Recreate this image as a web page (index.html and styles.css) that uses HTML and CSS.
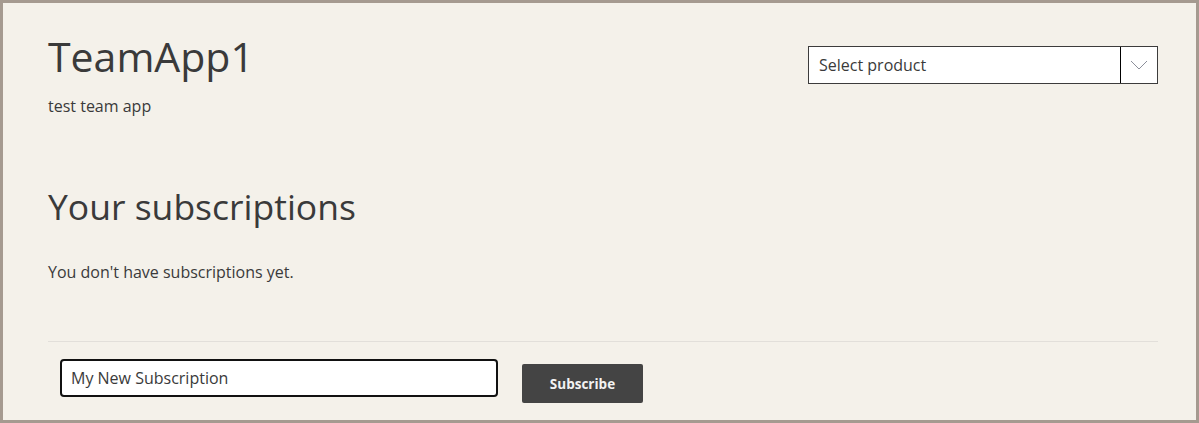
FILE: index.html
```html
<!DOCTYPE html>
<html>
<head>
<meta charset="utf-8">
<link rel="stylesheet" href="styles.css">
</head>
<body>
<div class="page">
  <div class="header">
    <div class="titles">
      <h1 class="title">TeamApp1</h1>
      <p class="subtitle">test team app</p>
    </div>
    <div class="select">
      <span class="select-text">Select product</span>
      <span class="select-arrow">
        <svg width="18" height="10" viewBox="0 0 18 10"><path d="M1 1 L9 9 L17 1" fill="none" stroke="#8c8f9a" stroke-width="1"/></svg>
      </span>
    </div>
  </div>
  <h2 class="section-title">Your subscriptions</h2>
  <p class="empty">You don't have subscriptions yet.</p>
  <div class="divider"></div>
  <div class="form-row">
    <div class="input">My New Subscription</div>
    <button class="btn">Subscribe</button>
  </div>
</div>
</body>
</html>
```
FILE: styles.css
```css
html, body {
  margin: 0;
  padding: 0;
}
body {
  font-family: "Open Sans", "Noto Sans", sans-serif;
  color: #3a3a3a;
}
.page {
  box-sizing: border-box;
  height: 423px;
  border: 3px solid #a59a90;
  background: #f4f1ea;
  padding: 28px 38px 0 45px;
  overflow: hidden;
}
.header {
  display: flex;
  justify-content: space-between;
  align-items: flex-start;
}
.title {
  margin: 0;
  font-size: 41px;
  font-weight: 400;
  line-height: 50px;
}
.subtitle {
  margin: 15px 0 0;
  font-size: 16px;
  line-height: 20px;
}
.select {
  margin-top: 15px;
  width: 350px;
  height: 38px;
  box-sizing: border-box;
  display: flex;
  background: #fff;
  border: 1px solid #3c3c3c;
}
.select-text {
  flex: 1;
  padding: 1px 0 0 10px;
  font-size: 16px;
  line-height: 35px;
  color: #3a3a3a;
}
.select-arrow {
  width: 36px;
  border-left: 1px solid #000;
  display: flex;
  align-items: center;
  justify-content: center;
}
.section-title {
  margin: 65px 0 0;
  font-size: 35.5px;
  font-weight: 400;
  line-height: 50px;
}
.empty {
  margin: 31px 0 0;
  font-size: 16px;
  line-height: 20px;
}
.divider {
  margin-top: 59px;
  height: 1px;
  background: #e2dfda;
}
.form-row {
  display: flex;
  align-items: flex-start;
  padding-left: 12px;
  margin-top: 17px;
  gap: 24px;
}
.input {
  box-sizing: border-box;
  width: 438px;
  height: 38px;
  background: #fff;
  border: 2px solid #111;
  border-radius: 4px;
  padding-left: 9px;
  font-size: 16px;
  line-height: 34px;
  color: #3a3a3a;
}
.btn {
  margin-top: 5px;
  width: 121px;
  height: 39px;
  border: 0;
  border-radius: 2px;
  background: #444;
  color: #f2f2f2;
  font-family: inherit;
  font-weight: 700;
  font-size: 13.5px;
  padding: 0;
}
```
